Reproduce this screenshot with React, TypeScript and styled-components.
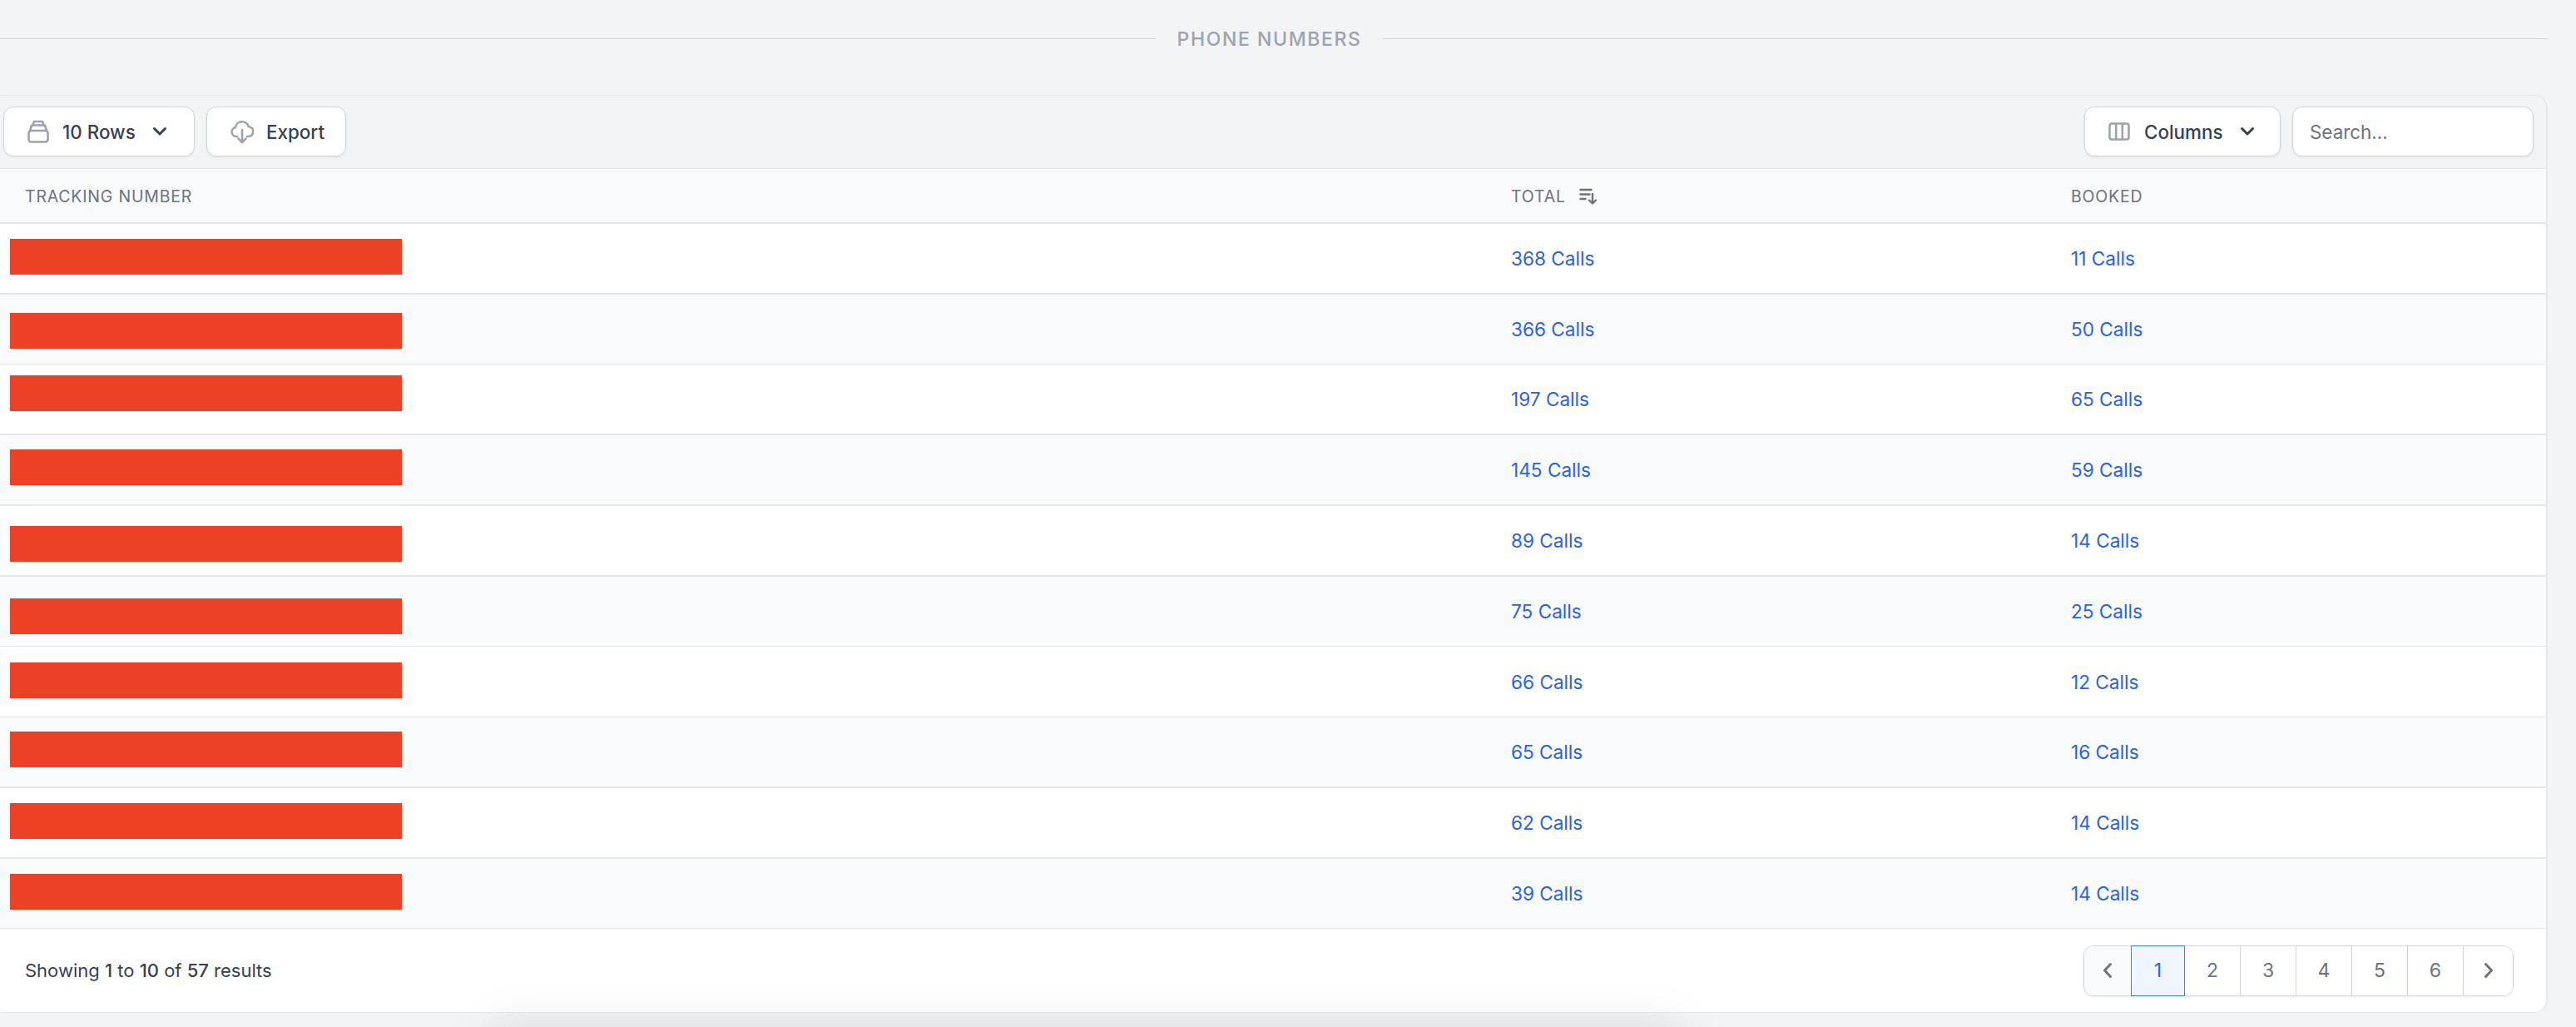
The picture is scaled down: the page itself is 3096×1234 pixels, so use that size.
import React from "react";
import styled, { createGlobalStyle } from "styled-components";

const GlobalStyle = createGlobalStyle`
  html, body {
    margin: 0;
    padding: 0;
    background: #f3f4f6;
    font-family: Inter, "Liberation Sans", sans-serif;
  }
`;

const Page = styled.div`
  position: relative;
  width: 3096px;
  height: 1234px;
  overflow: hidden;
  background: #f3f4f6;
`;

const Content = styled.div`
  width: 3073px;
  margin-left: -11px;
  padding-top: 32px;
`;

// section heading with a rule on both sides
const Divider = styled.div`
  display: flex;
  align-items: center;
  height: 29px;
  margin-bottom: 53px;
`;
const Rule = styled.div`
  flex: 1;
  height: 1px;
  background: #d1d5db;
`;
const DividerText = styled.span`
  padding: 0 26px;
  color: #9ca3af;
  font-size: 23px;
  font-weight: 500;
  letter-spacing: 1.6px;
  text-transform: uppercase;
`;

const Card = styled.div`
  width: 3073px;
  box-sizing: border-box;
  border: 1px solid #e5e7eb;
  border-width: 1px 2px 1px 1px;
  border-radius: 16px;
  overflow: hidden;
  background: #fff;
`;

const Toolbar = styled.div`
  display: flex;
  align-items: center;
  justify-content: space-between;
  box-sizing: border-box;
  height: 88px;
  padding: 0 15px 1px 14px;
  background: #f3f4f6;
  border-bottom: 1px solid #e5e7eb;
`;
const ToolGroup = styled.div`
  display: flex;
  gap: 14px;
`;
const ToolButton = styled.button<{ $width: number; $gap: number }>`
  display: flex;
  align-items: center;
  gap: ${(p) => p.$gap}px;
  box-sizing: border-box;
  width: ${(p) => p.$width}px;
  height: 60px;
  padding: 0 0 0 28px;
  border: 1px solid #d1d5db;
  border-radius: 12px;
  background: #fff;
  box-shadow: 0 1px 3px rgba(0, 0, 0, 0.08);
  color: #374151;
  font-family: inherit;
  font-size: 22.4px;
  font-weight: 500;
`;
const Chevron = styled.svg`
  width: 18px;
  height: 12px;
  margin-left: 4px;
  fill: none;
  stroke: #374151;
  stroke-width: 3;
  stroke-linecap: round;
  stroke-linejoin: round;
`;
const ToolIcon = styled.svg<{ $w: number; $h: number }>`
  flex: none;
  width: ${(p) => p.$w}px;
  height: ${(p) => p.$h}px;
  fill: none;
  stroke: #9ca3af;
  stroke-width: 2.6;
  stroke-linecap: round;
  stroke-linejoin: round;
`;
const SearchInput = styled.input`
  box-sizing: border-box;
  width: 290px;
  height: 60px;
  padding: 0 20px;
  border: 1px solid #d1d5db;
  border-radius: 12px;
  background: #fff;
  box-shadow: 0 1px 3px rgba(0, 0, 0, 0.08);
  font-family: inherit;
  font-size: 22.4px;
  outline: none;
  &::placeholder {
    color: #6b7280;
    opacity: 1;
  }
`;

const HeadRow = styled.div`
  display: grid;
  grid-template-columns: 1786px 673px 1fr;
  align-items: center;
  box-sizing: border-box;
  height: 66px;
  padding: 2px 0 0 40px;
  background: #f9fafb;
  border-bottom: 2px solid #e5e7eb;
`;
const HeadCell = styled.div`
  display: flex;
  align-items: center;
  gap: 16px;
  color: #6b7280;
  font-size: 19.5px;
  font-weight: 400;
  letter-spacing: 0.8px;
  text-transform: uppercase;
`;
const SortIcon = styled.svg`
  width: 22px;
  height: 20px;
  fill: none;
  stroke: #6b7280;
  stroke-width: 2.4;
  stroke-linecap: round;
  stroke-linejoin: round;
`;

const Row = styled.div<{ $height: number; $border: number; $even: boolean }>`
  position: relative;
  display: grid;
  grid-template-columns: 1786px 673px 1fr;
  align-items: center;
  height: ${(p) => p.$height}px;
  padding-left: 40px;
  background: ${(p) => (p.$even ? "#f9fafb" : "#fff")};
  border-bottom: ${(p) => p.$border}px solid #e5e7eb;
`;
// red block painted over the tracking number in the source image
const Redaction = styled.div<{ $top: number }>`
  position: absolute;
  top: ${(p) => p.$top}px;
  left: 22px;
  width: 471px;
  height: 43px;
  background: #ec4027;
`;
const CallLink = styled.a`
  color: #2a62e4;
  font-size: 22.6px;
  font-weight: 400;
  text-decoration: none;
`;

const Footer = styled.div`
  display: flex;
  align-items: center;
  justify-content: space-between;
  height: 100px;
  padding: 0 39px 0 40px;
  background: #fff;
`;
const Showing = styled.p`
  margin: 0;
  color: #374151;
  font-size: 22px;
  b {
    font-weight: 500;
  }
`;
const Pager = styled.nav`
  display: flex;
  height: 61px;
  box-sizing: border-box;
  border: 1px solid #d1d5db;
  border-radius: 12px;
  box-shadow: 0 1px 3px rgba(0, 0, 0, 0.08);
`;
const PageCell = styled.div<{ $width: number; $active?: boolean; $soft?: boolean }>`
  display: flex;
  align-items: center;
  justify-content: center;
  box-sizing: border-box;
  width: ${(p) => p.$width}px;
  margin: ${(p) => (p.$active ? "-1px 0 -1px -1px" : "0")};
  height: ${(p) => (p.$active ? "61px" : "auto")};
  border: ${(p) => (p.$active ? "1.5px solid #3b82f6" : "none")};
  border-right: ${(p) => (p.$active ? "1.5px solid #3b82f6" : "1px solid #d1d5db")};
  background: ${(p) => (p.$active ? "#eff6ff" : p.$soft ? "#f9fafb" : "#fff")};
  color: ${(p) => (p.$active ? "#2563eb" : "#6b7280")};
  font-size: 23px;
  font-weight: 400;
  &:first-child {
    border-radius: 11px 0 0 11px;
  }
  &:last-child {
    border-right: none;
    border-radius: 0 11px 11px 0;
  }
`;
const PageArrow = styled.svg`
  width: 12px;
  height: 20px;
  fill: none;
  stroke: #6b7280;
  stroke-width: 3;
  stroke-linecap: round;
  stroke-linejoin: round;
`;

// soft grey smudge along the bottom edge of the capture
const BottomGlow = styled.div`
  position: absolute;
  left: 590px;
  bottom: -68px;
  width: 1430px;
  height: 70px;
  background: rgba(0, 0, 0, 0.09);
  filter: blur(26px);
  pointer-events: none;
`;

const rows = [
  { total: 368, booked: 11, height: 83, border: 2, top: 18 },
  { total: 366, booked: 50, height: 83, border: 1, top: 22 },
  { total: 197, booked: 65, height: 83, border: 2, top: 13 },
  { total: 145, booked: 59, height: 83, border: 2, top: 17 },
  { total: 89, booked: 14, height: 83, border: 2, top: 24 },
  { total: 75, booked: 25, height: 83, border: 1, top: 26 },
  { total: 66, booked: 12, height: 84, border: 1, top: 19 },
  { total: 65, booked: 16, height: 83, border: 2, top: 17 },
  { total: 62, booked: 14, height: 83, border: 2, top: 18 },
  { total: 39, booked: 14, height: 83, border: 1, top: 18 },
];

function ChevronDown() {
  return (
    <Chevron viewBox="0 0 18 12">
      <path d="M2.5 2.5 9 9l6.5-6.5" />
    </Chevron>
  );
}

export default function App() {
  return (
    <Page>
      <GlobalStyle />
      <Content>
        <Divider>
          <Rule />
          <DividerText>Phone Numbers</DividerText>
          <Rule />
        </Divider>
        <Card>
          <Toolbar>
            <ToolGroup>
              <ToolButton $width={230} $gap={16}>
                <ToolIcon $w={26} $h={28} viewBox="0 0 26 28">
                  <rect x="1.5" y="13" width="23" height="13.5" rx="3" />
                  <path d="M3 13l2-6.5h16l2 6.5" />
                  <path d="M6.5 6.5 8 2h10l1.5 4.5" />
                </ToolIcon>
                10 Rows
                <ChevronDown />
              </ToolButton>
              <ToolButton $width={168} $gap={15}>
                <ToolIcon $w={28} $h={30} viewBox="0 0 28 30">
                  <path d="M8 21H7a5.5 5.5 0 0 1-1-10.9A8 8 0 0 1 21.6 9 6 6 0 0 1 21 21h-1" />
                  <path d="M14 13v15" />
                  <path d="M9.5 23.5 14 28l4.5-4.5" />
                </ToolIcon>
                Export
              </ToolButton>
            </ToolGroup>
            <ToolGroup>
              <ToolButton $width={236} $gap={17}>
                <ToolIcon $w={26} $h={22} viewBox="0 0 26 22">
                  <rect x="1.5" y="1.5" width="23" height="19" rx="2.5" />
                  <path d="M9.2 1.5v19M16.8 1.5v19" />
                </ToolIcon>
                Columns
                <ChevronDown />
              </ToolButton>
              <SearchInput placeholder="Search..." />
            </ToolGroup>
          </Toolbar>
          <HeadRow>
            <HeadCell>Tracking Number</HeadCell>
            <HeadCell>
              Total
              <SortIcon viewBox="0 0 22 20">
                <path d="M1.5 2h13M1.5 7.5h11M1.5 13h6" />
                <path d="M16 7v11M12 14.5l4 4 4-4" />
              </SortIcon>
            </HeadCell>
            <HeadCell>Booked</HeadCell>
          </HeadRow>
          {rows.map((r, i) => (
            <Row key={i} $height={r.height} $border={r.border} $even={i % 2 === 1}>
              <div />
              <CallLink>{r.total} Calls</CallLink>
              <CallLink>{r.booked} Calls</CallLink>
              <Redaction $top={r.top} />
            </Row>
          ))}
          <Footer>
            <Showing>
              Showing <b>1</b> to <b>10</b> of <b>57</b> results
            </Showing>
            <Pager>
              <PageCell $width={57} $soft>
                <PageArrow viewBox="0 0 12 20">
                  <path d="M9.5 2.5 2.5 10l7 7.5" />
                </PageArrow>
              </PageCell>
              <PageCell $width={65} $active>
                1
              </PageCell>
              {[2, 3, 4, 5, 6].map((n) => (
                <PageCell key={n} $width={67}>
                  {n}
                </PageCell>
              ))}
              <PageCell $width={59}>
                <PageArrow viewBox="0 0 12 20">
                  <path d="M2.5 2.5 9.5 10l-7 7.5" />
                </PageArrow>
              </PageCell>
            </Pager>
          </Footer>
        </Card>
      </Content>
      <BottomGlow />
    </Page>
  );
}
